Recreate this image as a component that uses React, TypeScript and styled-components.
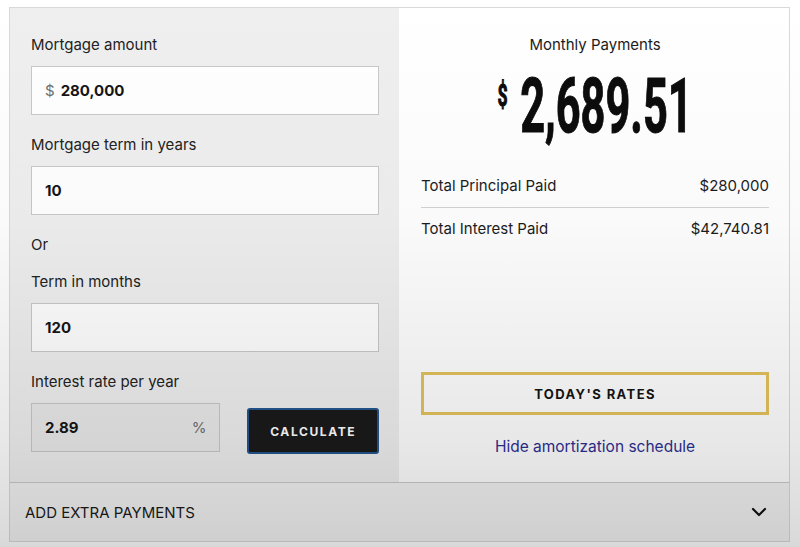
import styled, { createGlobalStyle } from 'styled-components';

const GlobalStyle = createGlobalStyle`
  html, body {
    margin: 0;
    padding: 0;
    background: #ffffff;
  }
  * {
    box-sizing: border-box;
  }
`;

const Page = styled.div`
  position: relative;
  width: 800px;
  height: 547px;
  padding: 7px 10px 0 9px;
  font-family: Inter, "Liberation Sans", sans-serif;
  color: #1c1c1c;

  /* the screenshot darkens towards the bottom */
  &::after {
    content: '';
    position: absolute;
    inset: 0;
    pointer-events: none;
    background: linear-gradient(
      to bottom,
      rgba(0, 0, 0, 0) 0%,
      rgba(0, 0, 0, 0.02) 40%,
      rgba(0, 0, 0, 0.09) 80%,
      rgba(0, 0, 0, 0.15) 100%
    );
  }
`;

const Card = styled.div`
  width: 781px;
  border: 1px solid #d9d9d9;
  display: flex;
  flex-direction: column;
`;

const Panels = styled.div`
  display: grid;
  grid-template-columns: 389px 1fr;
  height: 474px;
`;

const InputsPanel = styled.div`
  background: #efeff0;
  padding: 27px 20px 0 21px;
  display: flex;
  flex-direction: column;
`;

const Field = styled.div`
  display: flex;
  flex-direction: column;
  gap: 11px;
  margin-bottom: 20px;
`;

const Label = styled.div<{ $gapBelow?: number }>`
  font-size: 15px;
  line-height: 20px;
  color: #222;
  margin-bottom: ${(p) => (p.$gapBelow !== undefined ? `${p.$gapBelow}px` : '0')};
`;

const InputBox = styled.div<{ $width?: number; $muted?: boolean }>`
  width: ${(p) => (p.$width ? `${p.$width}px` : '100%')};
  height: 49px;
  border: 1px solid #c8c8c8;
  background: ${(p) => (p.$muted ? '#eaeaeb' : '#ffffff')};
  display: flex;
  align-items: center;
  padding: 0 13px;
  gap: 6px;
  font-size: 15px;
  font-weight: 700;
  color: #151515;
`;

const Affix = styled.span<{ $end?: boolean }>`
  font-weight: 400;
  color: #6f6f6f;
  margin-left: ${(p) => (p.$end ? 'auto' : '0')};
`;

const RateRow = styled.div`
  display: flex;
  align-items: flex-start;
`;

const CalculateButton = styled.button`
  margin: 5px 0 0 27px;
  width: 132px;
  height: 46px;
  background: #1a1a1b;
  border: 2px solid #24558e;
  border-radius: 3px;
  color: #ffffff;
  font-family: Inter, "Liberation Sans", sans-serif;
  font-size: 12px;
  font-weight: 700;
  letter-spacing: 1.6px;
`;

const ResultsPanel = styled.div`
  background: #ffffff;
  padding: 27px 20px 25px 22px;
  display: flex;
  flex-direction: column;
`;

const ResultTitle = styled.div`
  text-align: center;
  font-size: 15px;
  line-height: 20px;
  color: #1c1c1c;
`;

const AmountWrap = styled.div`
  margin-top: 13px;
  height: 76px;
  display: flex;
  justify-content: center;
`;

const Amount = styled.div`
  display: inline-flex;
  align-items: flex-start;
  transform: scaleX(0.57);
  font-family: Roboto, "Liberation Sans", sans-serif;
  font-weight: 700;
  color: #0c0c0c;
  -webkit-text-stroke: 1.1px #0c0c0c;
`;

const Currency = styled.span`
  font-size: 31px;
  line-height: 31px;
  margin-top: 12px;
  margin-right: 22px;
`;

const Figure = styled.span`
  font-size: 76px;
  line-height: 76px;
`;

const Totals = styled.div`
  margin-top: 21px;
  display: flex;
  flex-direction: column;
`;

const TotalRow = styled.div<{ $divided?: boolean }>`
  display: flex;
  justify-content: space-between;
  padding: 11px 0;
  font-size: 15px;
  line-height: 20px;
  color: #1c1c1c;
  border-bottom: ${(p) => (p.$divided ? '1px solid #d4d4d4' : 'none')};
`;

const RatesButton = styled.button`
  margin-top: auto;
  width: 100%;
  height: 43px;
  background: transparent;
  border: 3px solid #e4c25c;
  font-family: Inter, "Liberation Sans", sans-serif;
  font-size: 13px;
  font-weight: 700;
  letter-spacing: 1.4px;
  color: #141414;
`;

const ScheduleLink = styled.a`
  margin-top: 22px;
  text-align: center;
  font-size: 15.5px;
  line-height: 20px;
  color: #2d2e93;
  text-decoration: none;
`;

const ExtraBar = styled.div`
  height: 59px;
  border-top: 1px solid #c9c9c9;
  background: #f3f3f3;
  display: flex;
  align-items: center;
  justify-content: space-between;
  padding: 0 22px 0 15px;
  font-size: 15px;
  color: #1a1a1a;
  text-transform: uppercase;
`;

const Chevron = () => (
  <svg width="16" height="10" viewBox="0 0 16 10" fill="none">
    <path d="M2 2l6 6 6-6" stroke="#111" strokeWidth="2.2" strokeLinecap="round" strokeLinejoin="round" />
  </svg>
);

export default function App() {
  return (
    <>
      <GlobalStyle />
      <Page>
        <Card>
          <Panels>
            <InputsPanel>
              <Field>
                <Label>Mortgage amount</Label>
                <InputBox>
                  <Affix>$</Affix>
                  280,000
                </InputBox>
              </Field>
              <Field>
                <Label>Mortgage term in years</Label>
                <InputBox>10</InputBox>
              </Field>
              <Label $gapBelow={17}>Or</Label>
              <Field>
                <Label>Term in months</Label>
                <InputBox>120</InputBox>
              </Field>
              <Field>
                <Label>Interest rate per year</Label>
                <RateRow>
                  <InputBox $width={190} $muted>
                    2.89
                    <Affix $end>%</Affix>
                  </InputBox>
                  <CalculateButton>CALCULATE</CalculateButton>
                </RateRow>
              </Field>
            </InputsPanel>
            <ResultsPanel>
              <ResultTitle>Monthly Payments</ResultTitle>
              <AmountWrap>
                <Amount>
                  <Currency>$</Currency>
                  <Figure>2,689.51</Figure>
                </Amount>
              </AmountWrap>
              <Totals>
                <TotalRow $divided>
                  <span>Total Principal Paid</span>
                  <span>$280,000</span>
                </TotalRow>
                <TotalRow>
                  <span>Total Interest Paid</span>
                  <span>$42,740.81</span>
                </TotalRow>
              </Totals>
              <RatesButton>TODAY'S RATES</RatesButton>
              <ScheduleLink href="#">Hide amortization schedule</ScheduleLink>
            </ResultsPanel>
          </Panels>
          <ExtraBar>
            <span>Add extra payments</span>
            <Chevron />
          </ExtraBar>
        </Card>
      </Page>
    </>
  );
}
